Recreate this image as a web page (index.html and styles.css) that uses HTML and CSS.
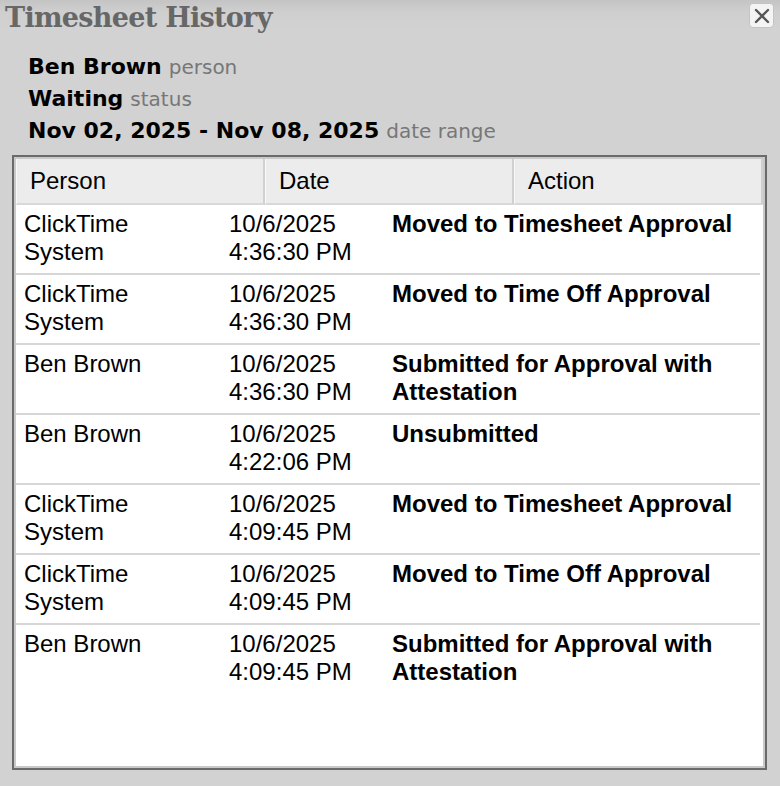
FILE: index.html
```html
<!DOCTYPE html>
<html lang="en">
<head>
    <meta charset="UTF-8">
    <meta name="viewport" content="width=device-width, initial-scale=1.0">
    <title>Timesheet History</title>
    <link rel="stylesheet" href="styles.css">
</head>
<body>
    <div class="dialog">
        <div class="title-bar">
            <h1 class="title">Timesheet History</h1>
            <button class="close-btn" aria-label="Close">
                <svg width="16" height="16" viewBox="0 0 16 16">
                    <path d="M2 2 L14 14 M14 2 L2 14" stroke="#555" stroke-width="2.4" stroke-linecap="round"/>
                </svg>
            </button>
        </div>

        <div class="info">
            <div class="info-line"><strong>Ben Brown</strong> <span class="label">person</span></div>
            <div class="info-line"><strong>Waiting</strong> <span class="label">status</span></div>
            <div class="info-line"><strong>Nov 02, 2025 - Nov 08, 2025</strong> <span class="label">date range</span></div>
        </div>

        <div class="history-box">
            <div class="history-head">
                <div class="head-cell">Person</div>
                <div class="head-cell">Date</div>
                <div class="head-cell">Action</div>
            </div>
            <div class="history-rows">
                <div class="row">
                    <div class="cell">ClickTime System</div>
                    <div class="cell">10/6/2025 4:36:30 PM</div>
                    <div class="cell action">Moved to Timesheet Approval</div>
                </div>
                <div class="row">
                    <div class="cell">ClickTime System</div>
                    <div class="cell">10/6/2025 4:36:30 PM</div>
                    <div class="cell action">Moved to Time Off Approval</div>
                </div>
                <div class="row">
                    <div class="cell">Ben Brown</div>
                    <div class="cell">10/6/2025 4:36:30 PM</div>
                    <div class="cell action">Submitted for Approval with Attestation</div>
                </div>
                <div class="row">
                    <div class="cell">Ben Brown</div>
                    <div class="cell">10/6/2025 4:22:06 PM</div>
                    <div class="cell action">Unsubmitted</div>
                </div>
                <div class="row">
                    <div class="cell">ClickTime System</div>
                    <div class="cell">10/6/2025 4:09:45 PM</div>
                    <div class="cell action">Moved to Timesheet Approval</div>
                </div>
                <div class="row">
                    <div class="cell">ClickTime System</div>
                    <div class="cell">10/6/2025 4:09:45 PM</div>
                    <div class="cell action">Moved to Time Off Approval</div>
                </div>
                <div class="row">
                    <div class="cell">Ben Brown</div>
                    <div class="cell">10/6/2025 4:09:45 PM</div>
                    <div class="cell action">Submitted for Approval with Attestation</div>
                </div>
            </div>
        </div>
    </div>
</body>
</html>
```

FILE: styles.css
```css
:root {
    --bg-color: #d2d2d2;
    --border-dark: #6a6a6a;
    --border-light: #c9c9c9;
    --head-color: #ececec;
    --line-color: #d6d6d6;
}

body {
    margin: 0;
    padding: 0;
    background-color: var(--bg-color);
    font-family: "Liberation Sans", Arial, sans-serif;
    color: #000;
}

.dialog {
    height: 786px;
    overflow: hidden;
}

.title-bar {
    display: flex;
    justify-content: space-between;
    align-items: flex-start;
    height: 40px;
    padding: 0 6px 0 5px;
    background: linear-gradient(#c4c4c4 0, #cfcfcf 12px, var(--bg-color) 30px);
}

.title {
    margin: 0;
    font-family: "DejaVu Serif", Georgia, serif;
    font-size: 27px;
    font-weight: bold;
    letter-spacing: -0.7px;
    color: #676767;
    line-height: 36px;
}

.close-btn {
    width: 25px;
    height: 25px;
    margin-top: 3px;
    padding: 0;
    border: 1px solid #c4c4c4;
    border-radius: 4px;
    background-color: #f4f4f4;
    display: flex;
    justify-content: center;
    align-items: center;
}

.info {
    padding: 11px 0 0 28px;
    font-family: "DejaVu Sans", Verdana, sans-serif;
    font-size: 22px;
    line-height: 32px;
}

.info-line strong {
    font-weight: bold;
}

.label {
    font-size: 20px;
    color: #777;
}

.history-box {
    margin: 8px 0 0 12px;
    width: 751px;
    height: 611px;
    border: 2px solid var(--border-dark);
    box-shadow: inset 0 0 0 2px var(--border-light);
    background-color: #fff;
    font-size: 24px;
}

.history-head {
    display: grid;
    grid-template-columns: 1fr 1fr 1fr;
    margin: 2px 2px 0 2px;
    height: 46px;
    background-color: var(--head-color);
}

.head-cell {
    display: flex;
    align-items: center;
    padding-left: 13px;
    border-left: 1px solid #f8f8f8;
    border-right: 2px solid #d0d0d0;
    border-bottom: 2px solid #d8d8d8;
}

.history-rows {
    margin: 0 2px;
}

.row {
    display: grid;
    grid-template-columns: 205px 163px 1fr;
    border-bottom: 2px solid var(--line-color);
    margin-right: 3px;
}

.row:last-child {
    border-bottom: none;
}

.cell {
    padding: 5px 10px 7px 8px;
    line-height: 28px;
}

.action {
    font-weight: bold;
}
```
